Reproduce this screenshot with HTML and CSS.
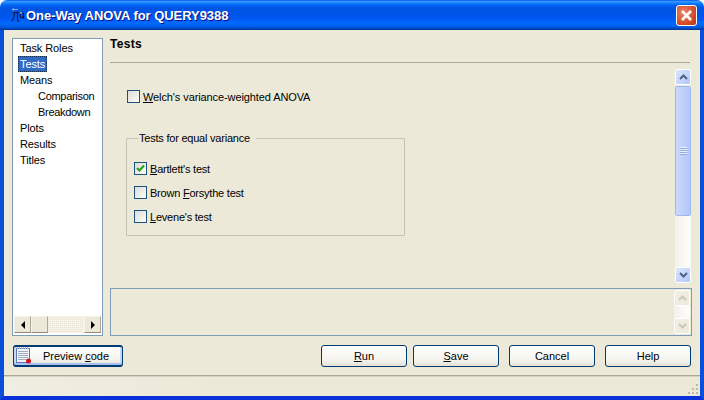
FILE: index.html
```html
<!DOCTYPE html>
<html lang="en">
<head>
    <meta charset="UTF-8">
    <title>One-Way ANOVA for QUERY9388</title>
    <link rel="stylesheet" href="styles.css">
</head>
<body>
    <div class="window">
        <div class="titlebar">
            <svg class="app-icon" width="16" height="16" viewBox="0 0 16 16">
                <path d="M3 2.500h6M3 2.500l2-1M3 2.500l2 1" fill="none" stroke="#7fa6e0" stroke-width="1"/>
                <path d="M4 5.500h6M5.500 5.500c0 4-1 7-3 9M8.500 5.500v7c0 1 .5 2 1.500 2" fill="none" stroke="#0a2350" stroke-width="1.100"/>
                <path d="M14.500 7c-1-1.500-3.500-1.500-3.500 1.500s2.500 3 3.500 .5M14.500 6v6" fill="none" stroke="#061a3c" stroke-width="1.100"/>
                <path d="M11 6h2" stroke="#e8eefc" stroke-width="1"/>
            </svg>
            <span class="title-text">One-Way ANOVA for QUERY9388</span>
            <div class="close-btn">
                <svg width="13" height="13" viewBox="0 0 13 13"><path d="M2 2l9 9M11 2l-9 9" stroke="#fff" stroke-width="2.600"/></svg>
            </div>
        </div>

        <div class="frame">
            <div class="main">
                <div class="tree">
                    <ul class="tree-list">
                        <li>Task Roles</li>
                        <li><span class="selected">Tests</span></li>
                        <li>Means</li>
                        <li class="child">Comparison</li>
                        <li class="child">Breakdown</li>
                        <li>Plots</li>
                        <li>Results</li>
                        <li>Titles</li>
                    </ul>
                    <div class="hscroll">
                        <div class="classic-btn"><span class="arrow-left"></span></div>
                        <div class="classic-btn"></div>
                        <div class="hscroll-track"></div>
                        <div class="classic-btn"><span class="arrow-right"></span></div>
                    </div>
                </div>

                <div class="pane">
                    <div class="pane-head">Tests</div>
                    <div class="pane-body">
                        <div class="options">
                            <label class="check"><span class="box"></span><span><u>W</u>elch's variance-weighted ANOVA</span></label>
                            <fieldset class="group">
                                <legend>Tests for equal variance</legend>
                                <label class="check">
                                    <span class="box">
                                        <svg width="11" height="11" viewBox="0 0 11 11"><path d="M2 5l2.500 2.500L9 2.500" fill="none" stroke="#21a121" stroke-width="2"/></svg>
                                    </span>
                                    <span><u>B</u>artlett's test</span>
                                </label>
                                <label class="check"><span class="box"></span><span>Brown <u>F</u>orsythe test</span></label>
                                <label class="check"><span class="box"></span><span><u>L</u>evene's test</span></label>
                            </fieldset>
                        </div>
                        <div class="vscroll">
                            <div class="xp-btn">
                                <svg width="9" height="6" viewBox="0 0 9 6"><path d="M1 5l3.500-3.500L8 5" fill="none" stroke="#4d6185" stroke-width="2"/></svg>
                            </div>
                            <div class="thumb">
                                <span class="grip-lines"></span>
                            </div>
                            <div class="vscroll-track"></div>
                            <div class="xp-btn">
                                <svg width="9" height="6" viewBox="0 0 9 6"><path d="M1 1l3.500 3.500L8 1" fill="none" stroke="#4d6185" stroke-width="2"/></svg>
                            </div>
                        </div>
                    </div>
                    <div class="message">
                        <div class="vscroll disabled">
                            <div class="xp-btn">
                                <svg width="9" height="6" viewBox="0 0 9 6"><path d="M1 5l3.500-3.500L8 5" fill="none" stroke="#c9c7ba" stroke-width="2"/></svg>
                            </div>
                            <div class="vscroll-track"></div>
                            <div class="xp-btn">
                                <svg width="9" height="6" viewBox="0 0 9 6"><path d="M1 1l3.500 3.500L8 1" fill="none" stroke="#c9c7ba" stroke-width="2"/></svg>
                            </div>
                        </div>
                    </div>
                </div>
            </div>

            <div class="buttons">
                <button class="btn preview">
                    <svg class="note-icon" width="16" height="18" viewBox="0 0 16 18">
                        <rect x="0.500" y="1.500" width="13" height="14" fill="#f2f4f9" stroke="#5c78b4"/>
                        <path d="M1 1h12" stroke="#d8c24a" stroke-width="2" stroke-dasharray="1 1"/>
                        <path d="M2 4.500h10M2 6.500h10M2 8.500h10M2 10.500h10M2 12.500h8" stroke="#a3acbc"/>
                        <circle cx="12.500" cy="14" r="2.500" fill="#d3101c"/>
                    </svg>
                    <span>Preview <u>c</u>ode</span>
                </button>
                <div class="actions">
                    <button class="btn"><span><u>R</u>un</span></button>
                    <button class="btn"><span><u>S</u>ave</span></button>
                    <button class="btn spaced">Cancel</button>
                    <button class="btn spaced">Help</button>
                </div>
            </div>

            <div class="statusbar">
                <svg class="size-grip" width="12" height="12" viewBox="0 0 12 12">
                    <path d="M9 1h2v2H9zM5 5h2v2H5zM9 5h2v2H9zM1 9h2v2H1zM5 9h2v2H5zM9 9h2v2H9z" fill="#bdbaa8"/>
                </svg>
            </div>
        </div>
    </div>
</body>
</html>
```

FILE: styles.css
```css
* {
    box-sizing: border-box;
}

body {
    margin: 0;
    background-color: #fff;
    font-family: "Liberation Sans", Arial, sans-serif;
    font-size: 11px;
    letter-spacing: -0.1px;
    color: #000;
}

.window {
    width: 704px;
    height: 400px;
    display: flex;
    flex-direction: column;
    overflow: hidden;
}

.titlebar {
    height: 30px;
    flex-shrink: 0;
    display: flex;
    align-items: center;
    padding: 0 7px 0 9px;
    border-radius: 7px 7px 0 0;
    background: linear-gradient(180deg, #0058ee 0%, #3593ff 5%, #288eff 8%, #127dff 11%, #036ffc 14%, #0262ee 18%, #0057e5 24%, #0054e3 30%, #0055eb 56%, #005bf5 66%, #026afe 76%, #0062ef 86%, #0052d6 92%, #0040ab 97%, #003092 100%);
}

.app-icon {
    flex-shrink: 0;
}

.title-text {
    flex: 1;
    margin-left: 1px;
    font-size: 13px;
    font-weight: bold;
    letter-spacing: -0.05px;
    color: #fff;
    text-shadow: 1px 1px 0 #0f1089;
}

.close-btn {
    width: 21px;
    height: 21px;
    display: flex;
    align-items: center;
    justify-content: center;
    border: 1px solid #fff;
    border-radius: 3px;
    background: radial-gradient(circle at 35% 35%, #e9866a 0%, #d9532f 55%, #b8300f 100%);
}

.frame {
    flex: 1;
    display: flex;
    flex-direction: column;
    background-color: #ece9d8;
    border-left: 4px solid #0a4fdc;
    border-right: 4px solid #0a4fdc;
    border-bottom: 4px solid #0831d9;
    min-height: 0;
}

.main {
    height: 298px;
    margin: 8px 8px 0;
    display: flex;
    gap: 7px;
}

.tree {
    width: 91px;
    flex-shrink: 0;
    display: flex;
    flex-direction: column;
    background-color: #fff;
    border: 1px solid #7f9db9;
}

.tree-list {
    flex: 1;
    list-style: none;
    margin: 0;
    padding: 1px 0 0 4px;
}

.tree-list li {
    height: 16px;
    line-height: 16px;
    padding-left: 3px;
    white-space: nowrap;
}

.tree-list li.child {
    padding-left: 21px;
    letter-spacing: -0.3px;
}

.selected {
    display: inline-block;
    height: 16px;
    margin-left: -2px;
    padding: 0 2px;
    background-color: #316ac5;
    color: #fff;
    outline: 1px dotted #1b2c4a;
    outline-offset: -1px;
}

.hscroll {
    height: 17px;
    margin: 0 1px 2px 1px;
    display: flex;
}

.classic-btn {
    width: 17px;
    display: flex;
    align-items: center;
    justify-content: center;
    background-color: #ece9d8;
    border: 1px solid;
    border-color: #f6f4ea #aca899 #8d8a7c #f6f4ea;
}

.hscroll-track {
    flex: 1;
    background-color: #f5f3ea;
    background-image: linear-gradient(45deg, #e6e2cf 25%, transparent 25%, transparent 75%, #e6e2cf 75%);
    background-size: 2px 2px;
}

.arrow-left {
    border-top: 4px solid transparent;
    border-bottom: 4px solid transparent;
    border-right: 4px solid #000;
}

.arrow-right {
    border-top: 4px solid transparent;
    border-bottom: 4px solid transparent;
    border-left: 4px solid #000;
}

.pane {
    flex: 1;
    min-width: 0;
    display: flex;
    flex-direction: column;
}

.pane-head {
    height: 25px;
    width: 580px;
    line-height: 13px;
    font-size: 12px;
    font-weight: bold;
    letter-spacing: 0.3px;
    border-bottom: 1px solid #aca899;
}

.pane-body {
    height: 214px;
    margin-top: 6px;
    padding-right: 1px;
    display: flex;
}

.options {
    flex: 1;
    padding: 21px 0 0 17px;
}

.check {
    display: flex;
    align-items: center;
    gap: 3px;
    height: 13px;
    white-space: nowrap;
}

.box {
    width: 13px;
    height: 13px;
    flex-shrink: 0;
    display: flex;
    align-items: center;
    justify-content: center;
    border: 1px solid #1c5180;
    background: linear-gradient(135deg, #dcdcd7 0%, #f0f0ea 60%, #fff 100%);
}

.group {
    width: 279px;
    height: 105px;
    margin: 28px 0 0 -1px;
    padding: 17px 0 0 7px;
    min-width: 0;
    border: 1px solid #c4c2b2;
    border-radius: 1px;
    letter-spacing: -0.22px;
}

.group legend {
    margin-left: 4px;
    padding: 0 6px 0 1px;
    line-height: 14px;
}

.group .check {
    margin-bottom: 11px;
}

.vscroll {
    width: 16px;
    flex-shrink: 0;
    display: flex;
    flex-direction: column;
}

.xp-btn {
    height: 16px;
    flex-shrink: 0;
    display: flex;
    align-items: center;
    justify-content: center;
    border: 1px solid #fff;
    border-radius: 2px;
    background: linear-gradient(135deg, #dbe6fd 0%, #c3d3fb 60%, #b1c6f8 100%);
}

.thumb {
    height: 130px;
    margin-top: 1px;
    flex-shrink: 0;
    display: flex;
    align-items: center;
    justify-content: center;
    border: 1px solid #fff;
    border-radius: 2px;
    outline: 1px solid #9db8ee;
    outline-offset: -1px;
    background: linear-gradient(90deg, #cbd9fd 0%, #bfd0fb 50%, #b2c7f8 100%);
}

.grip-lines {
    width: 7px;
    height: 8px;
    background: repeating-linear-gradient(180deg, #eef3fe 0, #eef3fe 1px, #8fa8e0 1px, #8fa8e0 2px);
}

.vscroll-track {
    flex: 1;
    background: linear-gradient(90deg, #f3f1ec 0%, #fdfdfb 100%);
}

.message {
    height: 48px;
    margin-top: 5px;
    padding: 1px 1px 1px 0;
    display: flex;
    justify-content: flex-end;
    border: 1px solid #7f9db9;
}

.vscroll.disabled .xp-btn {
    background: linear-gradient(135deg, #f2f0e6 0%, #ece9d8 100%);
}

.buttons {
    height: 22px;
    margin: 9px 9px 0 9px;
    display: flex;
    justify-content: space-between;
}

.actions {
    display: flex;
    gap: 6px;
}

.btn {
    width: 86px;
    height: 22px;
    padding: 0;
    font-family: inherit;
    font-size: 11px;
    color: #000;
    border: 1px solid #003c74;
    border-radius: 3px;
    background: linear-gradient(180deg, #fff 0%, #f5f4ee 70%, #e3e1d5 100%);
}

.btn.spaced {
    margin-left: 4px;
}

.preview {
    width: 110px;
    display: flex;
    align-items: center;
    padding: 0 0 0 2px;
    gap: 11px;
    border-width: 2px 1px;
    border-color: #003c74;
    box-shadow: inset 0 -2px 0 #a9c1ef, inset 2px 0 0 #c7d6f5, inset -2px 0 0 #c7d6f5;
}

.note-icon {
    flex-shrink: 0;
}

.statusbar {
    flex: 1;
    margin-top: 8px;
    position: relative;
    border-top: 1px solid #aca899;
    box-shadow: inset 0 1px 0 #d6d3c4;
    background: linear-gradient(90deg, #f0eee2 0%, #ece9d8 30%);
}

.size-grip {
    position: absolute;
    right: 1px;
    bottom: 1px;
}
```
